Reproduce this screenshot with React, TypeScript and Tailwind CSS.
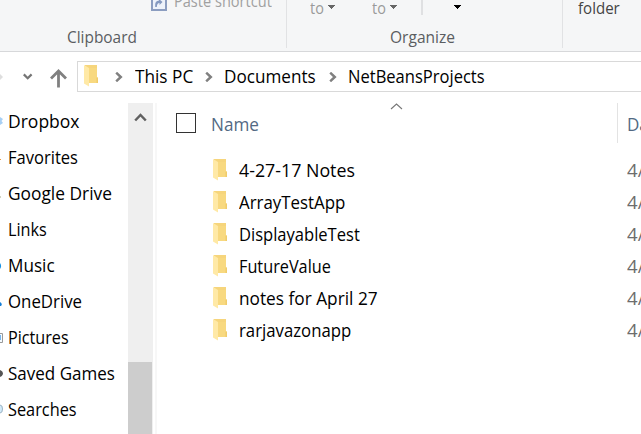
import { useLayoutEffect, useRef, useState } from "react";

/* A single-line label condensed to a fixed advance width. */
function Label({ text, width, className = "" }: { text: string; width: number; className?: string }) {
  const ref = useRef<HTMLSpanElement>(null);
  const [scale, setScale] = useState(1);
  useLayoutEffect(() => {
    if (ref.current) setScale(width / ref.current.offsetWidth);
  }, [width, text]);
  return (
    <span className={`block shrink-0 whitespace-nowrap ${className}`} style={{ width }}>
      <span ref={ref} className="inline-block origin-left" style={{ transform: `scaleX(${scale})` }}>
        {text}
      </span>
    </span>
  );
}

function Folder() {
  return (
    <svg className="block h-[22px] w-[15px] shrink-0" viewBox="0 0 15 22">
      <path d="M1 0H13V12L14 13V18H1Z" fill="#f6d57c" />
      <path d="M5 3H13V12L14 13V18H5Z" fill="#f8d980" />
      <path d="M0 0L5 3V21.5L0 18.5Z" fill="#ffe9a6" />
      <path d="M12.5 12.5L14 13V18H12.5Z" fill="#f0cc6b" />
    </svg>
  );
}

function Crumb() {
  return (
    <svg className="block h-[10px] w-2 shrink-0" viewBox="0 0 8 10">
      <path d="M1.2 .7L5.8 5L1.2 9.3" fill="none" stroke="#808080" strokeWidth="2.5" />
    </svg>
  );
}

function Drop({ className = "fill-[#666666]" }: { className?: string }) {
  return (
    <svg className={`block h-1 w-[7px] shrink-0 ${className}`} viewBox="0 0 7 4" shapeRendering="crispEdges">
      <path d="M0 0H7V1H6V2H5V3H4V4H3V3H2V2H1V1H0Z" />
    </svg>
  );
}

function NavIcon({ name }: { name: string }) {
  return (
    <svg className="block h-5 w-1 shrink-0" viewBox="0 0 4 20">
      {name === "Dropbox" && <path d="M0 6L3 8L1.5 10L3 12L0 14Z" fill="#a8d0f5" />}
      {name === "Favorites" && <path d="M0 12H1V13H0Z" fill="#ec9b42" />}
      {name === "Google Drive" && <path d="M0 13H.7V15H0Z" fill="#bcc2a8" />}
      {name === "Music" && <path d="M0 8Q2.2 11 0 14Z" fill="#1592e6" />}
      {name === "OneDrive" && <path d="M0 11Q3 13 1 15H0Z" fill="#1580d8" />}
      {name === "Pictures" && (
        <>
          <path d="M0 6.5H2.5V15.5H0" fill="#f5fbff" stroke="#9a9a9a" />
          <path d="M0 8H1V13H0Z" fill="#78b7ef" />
        </>
      )}
      {name === "Saved Games" && <path d="M0 7Q3 8 3 11Q2 14 0 14Z" fill="#555555" />}
      {name === "Searches" && <path d="M0 6Q2.5 6 2.5 10Q2.5 14 0 14" fill="#d2ebfa" stroke="#9bb3c4" />}
    </svg>
  );
}

const places: [string, number][] = [
  ["Dropbox", 71],
  ["Favorites", 70],
  ["Google Drive", 104],
  ["Links", 39],
  ["Music", 47],
  ["OneDrive", 74],
  ["Pictures", 61],
  ["Saved Games", 107],
  ["Searches", 69],
];

const files: [string, number][] = [
  ["4-27-17 Notes", 116],
  ["ArrayTestApp", 106],
  ["DisplayableTest", 121],
  ["FutureValue", 92],
  ["notes for April 27", 139],
  ["rarjavazonapp", 112],
];

export default function App() {
  return (
    <div className="flex h-[434px] w-[641px] flex-col overflow-hidden bg-white font-['Open_Sans','Noto_Sans',sans-serif] text-[17.5px] leading-6 text-black">
      <header className="flex h-[52px] shrink-0 border-b border-[#d7d8da] bg-[#f5f6f7] text-[16.5px]">
        <section className="h-12 w-[287px] shrink-0 border-r border-[#e1e2e4]">
          <div className="-mt-[11px] flex h-9 pl-[151px]">
            <svg className="mt-[6px] h-4 w-4 shrink-0" viewBox="0 0 16 16">
              <rect x="1" y="1" width="14" height="14" fill="#edf2fa" stroke="#8b9dc0" strokeWidth="2" />
              <path d="M4.2 12V10Q4 6 8 5.5V4L11.5 7L8.5 10V8Q6 8 5.8 12Z" fill="#8499c0" />
            </svg>
            <Label text="Paste shortcut" width={98} className="ml-[7px] text-[#a0a0a0]" />
          </div>
          <div className="pl-[67px]">
            <Label text="Clipboard" width={70} className="text-[#5a5d61]" />
          </div>
        </section>
        <section className="h-12 w-[276px] shrink-0 border-r border-[#e1e2e4]">
          <div className="-mt-1 flex h-[29px] pl-[23px]">
            <Label text="to" width={14} className="text-[#9a9a9a]" />
            <div className="ml-1 pt-[9px]"><Drop /></div>
            <Label text="to" width={14} className="ml-[37px] text-[#9a9a9a]" />
            <div className="ml-1 pt-[9px]"><Drop /></div>
            <div className="ml-6 h-[19px] w-[2px] bg-[#dfe0e2]" />
            <div className="ml-[31px] pt-[9px]"><Drop className="fill-black" /></div>
          </div>
          <div className="pl-[103px]">
            <Label text="Organize" width={65} className="text-[#5a5d61]" />
          </div>
        </section>
        <div className="-mt-1 pl-[15px]">
          <Label text="folder" width={42} className="text-[#444444]" />
        </div>
      </header>

      <nav className="flex h-[51px] shrink-0 pt-[9px]">
        <div className="flex h-[31px] w-[77px] shrink-0 items-center">
          <svg className="h-3 w-1" viewBox="0 0 4 12">
            <path d="M0 3L3 6L0 9Z" fill="#dedede" />
          </svg>
          <svg className="ml-[19px] h-2 w-[10px]" viewBox="0 0 10 8">
            <path d="M.8 1.4L4.7 5.3L8.6 1.4" fill="none" stroke="#757575" strokeWidth="2.2" />
          </svg>
          <svg className="ml-[17px] mt-[3px] h-[19px] w-[18px]" viewBox="0 0 18 19">
            <path d="M8.5 18.5V2M1 9.5L8.5 2L16 9.5" fill="none" stroke="#808080" strokeWidth="2.8" />
          </svg>
        </div>
        <div className="flex h-[31px] flex-1 items-center border border-r-0 border-[#d9d9d9] pl-[6px]">
          <div className="-mt-px"><Folder /></div>
          <div className="ml-4"><Crumb /></div>
          <Label text="This PC" width={58} className="-mt-0.5 ml-3" />
          <div className="ml-3"><Crumb /></div>
          <Label text="Documents" width={92} className="-mt-0.5 ml-[11px]" />
          <div className="ml-[13px]"><Crumb /></div>
          <Label text="NetBeansProjects" width={137} className="-mt-0.5 ml-[11px]" />
        </div>
      </nav>

      <main className="flex min-h-0 flex-1">
        <aside className="w-32 shrink-0">
          {places.map(([name, width]) => (
            <div key={name} className="flex h-9 items-center">
              <NavIcon name={name} />
              <Label text={name} width={width} className="ml-1" />
            </div>
          ))}
        </aside>
        <div className="flex w-[25px] shrink-0 flex-col items-start bg-[#efefef]">
          <div className="flex h-[259px] w-6 shrink-0 justify-center pt-[10px]">
            <svg className="h-[9px] w-[13px]" viewBox="0 0 13 9">
              <path d="M1.2 7.5L6.5 2L11.8 7.5" fill="none" stroke="#606060" strokeWidth="2.5" />
            </svg>
          </div>
          <div className="w-6 flex-1 bg-[#cdcdcd]" />
        </div>
        <div className="ml-[2px] w-[2px] shrink-0 bg-[#f7f7f7]" />
        <section className="min-w-0 flex-1">
          <div className="relative flex h-10 items-center">
            <div className="ml-[19px] h-5 w-5 shrink-0 border border-[#333333] bg-white" />
            <Label text="Name" width={48} className="ml-[15px] mt-0.5 text-[#526983]" />
            <svg className="absolute left-[233px] top-0 h-[7px] w-[13px]" viewBox="0 0 13 7">
              <path d="M1 6L6.5 1L12 6" fill="none" stroke="#777777" strokeWidth="1.1" />
            </svg>
            <div className="ml-auto flex h-10 w-6 items-center overflow-hidden border-l border-[#e3e3e3]">
              <Label text="Date" width={38} className="ml-[9px] mt-0.5 text-[#526983]" />
            </div>
          </div>
          <div className="pt-[11px]">
            {files.map(([name, width]) => (
              <div key={name} className="flex h-8 items-center overflow-hidden pl-14">
                <Folder />
                <Label text={name} width={width} className="ml-[11px]" />
                <div className="ml-auto w-[14px] shrink-0 overflow-hidden">
                  <Label text="4/" width={17} className="text-[#6d6d6d]" />
                </div>
              </div>
            ))}
          </div>
        </section>
      </main>
    </div>
  );
}
